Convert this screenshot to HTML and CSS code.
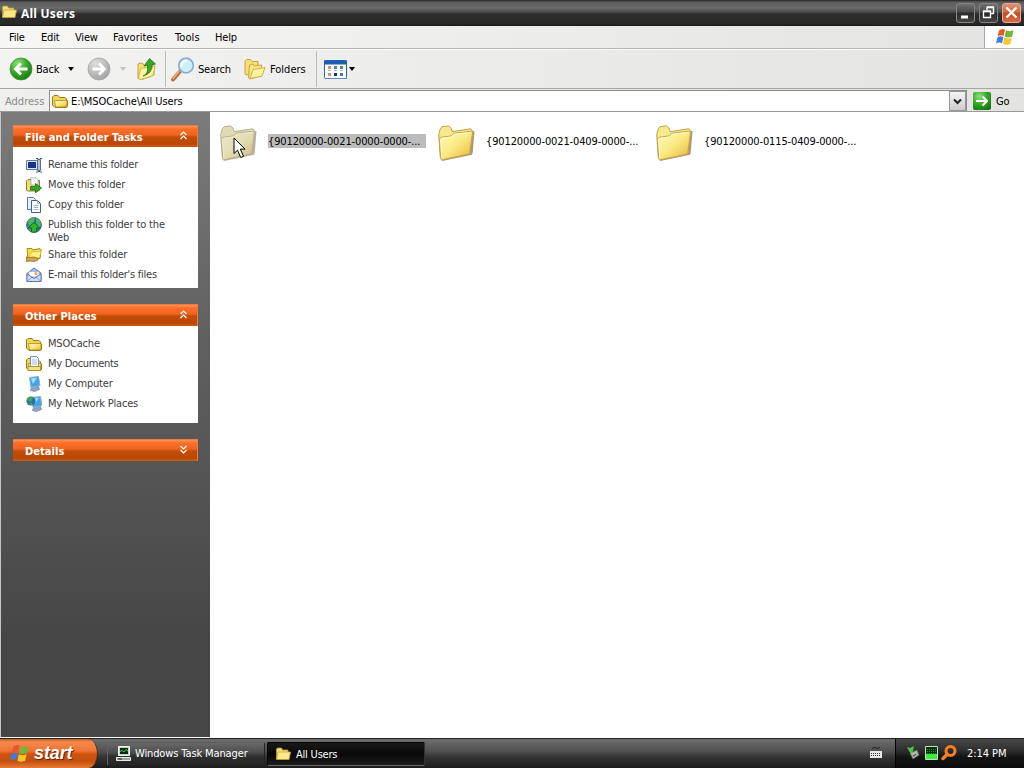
FILE: index.html
```html
<!DOCTYPE html>
<html lang="en">
<head>
  <meta charset="UTF-8" />
  <title>All Users</title>
  <link rel="stylesheet" href="styles.css">
</head>
<body>

  <!-- Shared icons -->
  <svg class="defs" width="0" height="0">
    <defs>
      <linearGradient id="gFolder" x1="0" y1="0" x2="1" y2="1">
        <stop offset="0" stop-color="#fffbb5"/><stop offset=".5" stop-color="#fbe983"/><stop offset="1" stop-color="#e3b32f"/>
      </linearGradient>
      <radialGradient id="gGreen" cx=".35" cy=".25" r=".8">
        <stop offset="0" stop-color="#8fe07a"/><stop offset=".5" stop-color="#3cab2c"/><stop offset="1" stop-color="#167a10"/>
      </radialGradient>
      <radialGradient id="gGray" cx=".35" cy=".25" r=".8">
        <stop offset="0" stop-color="#dedede"/><stop offset="1" stop-color="#a2a2a2"/>
      </radialGradient>
      <symbol id="folder" viewBox="0 0 16 16">
        <path d="M.5 12V4L2 2.500h4L7.500 4.500H13L14.500 6v1L15.500 8v5.500l-1 1H3z" fill="#f0d45c" stroke="#9c7a14"/>
        <path d="M3.500 14L2.500 7.500H15V13.500l-1 .5z" fill="url(#gFolder)" stroke="#b08a1c" stroke-width=".8"/>
      </symbol>
      <symbol id="folderOpen" viewBox="0 0 16 16">
        <path d="M1.500 13V3l1-1h4l1 2H13v3" fill="#f3df7c" stroke="#b5962c" stroke-width=".8"/>
        <path d="M1.500 13.500L3 6h12.500l-1.500 7.500z" fill="#fbe88a" stroke="#c8a52c" stroke-width=".8"/>
      </symbol>
      <symbol id="bigFolder" viewBox="0 0 40 42">
        <path d="M5 38.500L36 32 38.500 8 36.500 31.500" fill="none" stroke="#6f5420" stroke-width="2" opacity=".6"/>
        <path d="M3.500 36L1.800 11.500L3.500 5.500 5.500 3.300 12 2.500 14.500 4.500 16 8.500 35.500 5.500 37 7 35 31z" fill="#f8e98c" stroke="#b79b48"/>
        <path d="M4 37.500L2.700 16.500Q3 14.500 5 14.300L15 13 18 10.200 36 8Q37.500 8 37.300 10L34.500 30.500Q34.300 32 33 32.300L6 38Q4.200 38.500 4 37.500z" fill="url(#gFolder)" stroke="#c2a145"/>
        <path d="M5 36L3.800 16.500 5.500 15.500 15.500 14 18.500 11.300 35.500 9.300" fill="none" stroke="#fffde0" stroke-width=".9"/>
      </symbol>
      <symbol id="flag" viewBox="0 0 20 18">
        <path d="M4 2.500Q7-.2 10 1.700L8.600 8Q5.500 6.300 2.600 8.400z" fill="#e8562a"/>
        <path d="M11 2.200Q14.500 4 18.500 2.300L17 8.800Q13 10.300 9.600 8.500z" fill="#6fb63a"/>
        <path d="M2.400 9.400Q5.400 7.300 8.400 9L7 15.300Q4 13.500 1 15.600z" fill="#3f7ddd"/>
        <path d="M9.400 9.600Q12.700 11.300 16.800 9.900L15.300 16Q11.500 17.600 8 15.800z" fill="#f6c62b"/>
      </symbol>
      <symbol id="up" viewBox="0 0 9 9">
        <path d="M1.500 4L4.500 1l3 3M1.500 8l3-3 3 3" fill="none" stroke="#fff" stroke-width="1.200"/>
      </symbol>
      <symbol id="monitor" viewBox="0 0 16 16">
        <path d="M3.500 1.500l9-1L14 9.500 5 11.500z" fill="#3fa5e6" stroke="#8ab1d4"/>
        <path d="M5 2.500l6-.8-4 6z" fill="#a5dfff"/>
        <path d="M5 12.500l7.500-2 1 3-5 2-4-1z" fill="#8fa5c9" stroke="#71839f" stroke-width=".7"/>
      </symbol>
    </defs>
  </svg>

  <!-- Title bar -->
  <div class="titlebar">
    <svg class="title-icon" width="16" height="16"><use href="#folderOpen"/></svg>
    <h1>All Users</h1>
    <div class="window-buttons">
      <div class="win-btn"><svg width="19" height="19"><path d="M5 14h7" stroke="#fff" stroke-width="3"/></svg></div>
      <div class="win-btn"><svg width="19" height="19"><path d="M4.500 8.500h7v6h-7zM4 8h8M8 7V4.500h6.500v6H12M8 4h7" fill="none" stroke="#fff" stroke-width="1.400"/></svg></div>
      <div class="win-btn close"><svg width="19" height="19"><path d="M4.500 4.500l10 10M14.500 4.500l-10 10" stroke="#fff" stroke-width="2.200"/></svg></div>
    </div>
  </div>

  <!-- Menu bar -->
  <div class="menubar">
    <span class="m-file">File</span>
    <span class="m-edit">Edit</span>
    <span class="m-view">View</span>
    <span class="m-fav">Favorites</span>
    <span class="m-tools">Tools</span>
    <span class="m-help">Help</span>
    <div class="brand"><svg width="20" height="18"><use href="#flag"/></svg></div>
  </div>

  <!-- Toolbar -->
  <div class="toolbar">
    <div class="tool back">
      <svg width="24" height="24"><circle cx="12" cy="12" r="11" fill="url(#gGreen)" stroke="#3f8f34" stroke-width=".8"/><path d="M18.500 12H7M12 6.500L6.500 12l5.500 5.500" fill="none" stroke="#fff" stroke-width="2.800"/></svg>
      <span>Back</span>
      <i class="arrow"></i>
    </div>
    <div class="tool forward">
      <svg width="24" height="24"><circle cx="12" cy="12" r="11" fill="url(#gGray)" stroke="#a5a5a5" stroke-width=".8"/><path d="M5.500 12H17M12 6.500l5.500 5.500-5.500 5.500" fill="none" stroke="#fff" stroke-width="2.800"/></svg>
      <i class="arrow off"></i>
    </div>
    <svg class="tool-up" width="22" height="24" viewBox="0 0 22 24">
      <path d="M2 21.500V7l2-1 3 .5 1 2 10-1V18L6 22.500z" fill="#f4de78" stroke="#c5a238"/>
      <path d="M2.500 21.500l2-10L19 9l-2 9.500L5 22.500z" fill="#fff2a1" stroke="#cbab3e" stroke-width=".8"/>
      <path d="M7 19Q13 17 11.500 8L8 9l5.500-7.500L19.500 7l-3.500.5Q17 16 7 19z" fill="#36a52c" stroke="#1d7a18" stroke-width=".8"/>
    </svg>
    <div class="tool search">
      <svg width="26" height="26" viewBox="0 0 26 26">
        <path d="M3 23.500L9.500 16" stroke="#b8703c" stroke-width="4" stroke-linecap="round"/>
        <path d="M3 22.500L9 15.500" stroke="#f1b27c" stroke-width="1.500" stroke-linecap="round"/>
        <circle cx="16" cy="9.500" r="7.300" fill="#cdeefb" stroke="#8eaccb" stroke-width="1.700"/>
        <path d="M11.500 10.500Q12 5 17 4.500" fill="none" stroke="#fff" stroke-width="2.200"/>
      </svg>
      <span>Search</span>
    </div>
    <div class="tool folders">
      <svg width="22" height="22" viewBox="0 0 22 22">
        <path d="M1 15.500V3l1.500-1.500h4L8 3.500h6V14L2 17z" fill="#f6df75" stroke="#c9a63a"/>
        <path d="M4.500 20l1-13 3.500-1 1.500 2 7-1v11L6 21z" fill="#f8e588" stroke="#c9a63a"/>
        <path d="M6 20.500L9 11.500l12-2-3 8.500z" fill="#fff3a2" stroke="#d2b14a"/>
      </svg>
      <span>Folders</span>
    </div>
    <div class="tool views">
      <svg width="24" height="20">
        <rect x=".5" y=".5" width="22" height="18" rx="1" fill="#fff" stroke="#2467b3"/>
        <path d="M0 2.500h23" stroke="#1a5cb0" stroke-width="4"/><path d="M1 18.500h22" stroke="#5a8cc5"/>
        <path d="M4 7.500h3M4 14.500h3" stroke="#d98d78" stroke-width="3"/><path d="M10 7.500h3" stroke="#4b82c4" stroke-width="3"/>
        <path d="M16 7.500h3" stroke="#4d944c" stroke-width="3"/><path d="M10 14.500h3" stroke="#12386e" stroke-width="3"/><path d="M16 14.500h3" stroke="#4178bd" stroke-width="3"/>
        <path d="M4 10.500h3M10 10.500h3M16 10.500h3" stroke="#b5b5b5"/>
      </svg>
      <i class="arrow"></i>
    </div>
  </div>

  <!-- Address bar -->
  <div class="addressbar">
    <span class="address-label">Address</span>
    <div class="address-field">
      <svg width="16" height="16"><use href="#folder"/></svg>
      <span>E:\MSOCache\All Users</span>
      <div class="drop"><svg width="9" height="7"><path d="M1 1.500l3.500 3.500L8 1.500" fill="none" stroke="#222" stroke-width="2"/></svg></div>
    </div>
    <svg class="go-icon" width="18" height="18"><rect width="18" height="18" rx="2" fill="url(#gGreen)"/><path d="M3 9h11M9.500 4.500L14 9l-4.500 4.500" fill="none" stroke="#fff" stroke-width="2"/></svg>
    <span class="go">Go</span>
  </div>

  <div class="main">
    <!-- Task pane -->
    <div class="sidebar">
      <div class="panel">
        <div class="panel-head"><h2 class="h-tasks">File and Folder Tasks</h2><svg width="9" height="9"><use href="#up"/></svg></div>
        <ul class="panel-body tasks">
          <li>
            <svg width="16" height="16"><path d="M.5 3.500h11v9H.5z" fill="#dfe6f5" stroke="#6676a6"/><path d="M2 5h8v6H2z" fill="#14358f"/><path d="M10 1.500h2l1 1 1-1h2M10 15h2l1-1 1 1h2" fill="none" stroke="#47577e"/><path d="M11.500 2.500h3v11h-3z" fill="#b4bfd8" stroke="#5d6c91"/></svg>
            <span class="t1">Rename this folder</span>
          </li>
          <li>
            <svg width="16" height="16"><path d="M.5 13V4L2 2.500h3l1 1h7.500V13l-1 1H2z" fill="#f3dd6c" stroke="#94802c"/><path d="M5 .8h5l2 2V8H5z" fill="#fff" stroke="#8c9ab8" stroke-width=".7"/><path d="M4.500 9.500h5V6.500L15.500 11 9.500 15.800V13h-5z" fill="#36aa28" stroke="#176e12" stroke-width=".8"/></svg>
            <span class="t2">Move this folder</span>
          </li>
          <li>
            <svg width="16" height="16"><path d="M1.500.5h6l2 2v10h-8z" fill="#eaf2ff" stroke="#5277a8"/><path d="M5.500 3.500h6l3 3v9h-9z" fill="#fff" stroke="#3e628f"/><path d="M11.500 3.500v3h3M7.500 8.500h5M7.500 10.500h5M7.500 12.500h5" fill="none" stroke="#7fa3d2" stroke-width=".8"/></svg>
            <span class="t3">Copy this folder</span>
          </li>
          <li class="two-lines">
            <svg width="16" height="16"><circle cx="8" cy="8" r="7.500" fill="#2c6aa8" stroke="#245785" stroke-width=".7"/><path d="M1.500 5Q4 0 9 .8L8 5 3 9zM10 1q4 1 5 6l-1 4-4-5zM1 9q3 0 4 5-3-1-4-5z" fill="#4cb65a"/><path d="M8 5.500l6 5.500h-3.500v4h-5v-4H2z" fill="#2fb629" stroke="#126713" stroke-width=".8"/></svg>
            <span class="t4">Publish this folder to the<br>Web</span>
          </li>
          <li>
            <svg width="16" height="16"><path d="M1 1.500h5l1 1.500 7-1.500 1 1-1 9L2 12z" fill="#f5df3e" stroke="#a88820"/><path d="M3 11l2.500-6 9.500-1-1.500 7z" fill="#fff27d" stroke="#c9a63a" stroke-width=".6"/><path d="M0 10l4 .5 4-.5 4 1.500v1.500L8 14.500 4 14l-4 .5z" fill="#d0a54e" stroke="#80601f" stroke-width=".7"/></svg>
            <span class="t5">Share this folder</span>
          </li>
          <li>
            <svg width="16" height="16"><path d="M1 6.500L8 1l7 5v8.500H1z" fill="#a9bee8" stroke="#5870ad"/><path d="M3 4.500h10V10H3z" fill="#fff" stroke="#93a5cc" stroke-width=".7"/><circle cx="10" cy="6.500" r="1.500" fill="#f0a04b"/><path d="M1 7l7 4.500L15 7v7.500H1z" fill="#cfdefa" stroke="#5870ad" stroke-width=".9"/><path d="M1 14.500l5-4.500M15 14.500L10 10" stroke="#6f87bf" stroke-width=".8"/></svg>
            <span class="t6">E-mail this folder's files</span>
          </li>
        </ul>
      </div>

      <div class="panel">
        <div class="panel-head"><h2 class="h-places">Other Places</h2><svg width="9" height="9"><use href="#up"/></svg></div>
        <ul class="panel-body places">
          <li><svg width="16" height="16"><use href="#folder"/></svg><span class="p1">MSOCache</span></li>
          <li>
            <svg width="16" height="16"><use href="#folder"/><path d="M4.500.5h6l2 2v8h-8z" fill="#fff" stroke="#597fb0" stroke-width=".8"/><path d="M6 4h5M6 6h5M6 8h5" stroke="#86a7d4" stroke-width=".8"/><path d="M2 10.500h12.500v4H2z" fill="#f6e27b" stroke="#a8851d" stroke-width=".8"/></svg>
            <span class="p2">My Documents</span>
          </li>
          <li><svg width="16" height="16"><use href="#monitor"/></svg><span class="p3">My Computer</span></li>
          <li>
            <svg width="16" height="16"><use href="#monitor" x="2"/><circle cx="5" cy="5" r="4.600" fill="#2d6fa8"/><path d="M1 4q2-4 6-2.500L5 6zM3 8l2-2 2 3z" fill="#43a94a"/></svg>
            <span class="p4">My Network Places</span>
          </li>
        </ul>
      </div>

      <div class="panel">
        <div class="panel-head"><h2 class="h-details">Details</h2><svg class="flip" width="9" height="9"><use href="#up"/></svg></div>
      </div>
    </div>

    <!-- Folder contents -->
    <div class="files">
      <div class="file selected">
        <svg width="38" height="41" viewBox="0 0 40 42"><use href="#bigFolder" width="40" height="42"/></svg>
        <span>{90120000-0021-0000-0000-...</span>
        <svg class="cursor" width="14" height="22"><path d="M1 1v15.500l3.500-3.300 3.200 7.300 2.800-1.200-3.200-7.200H12z" fill="#fff" stroke="#000"/></svg>
      </div>
      <div class="file">
        <svg width="38" height="41" viewBox="0 0 40 42"><use href="#bigFolder" width="40" height="42"/></svg>
        <span>{90120000-0021-0409-0000-...</span>
      </div>
      <div class="file">
        <svg width="38" height="41" viewBox="0 0 40 42"><use href="#bigFolder" width="40" height="42"/></svg>
        <span>{90120000-0115-0409-0000-...</span>
      </div>
    </div>
  </div>

  <!-- Taskbar -->
  <div class="taskbar">
    <div class="start">
      <svg width="21" height="19" viewBox="0 0 20 18"><use href="#flag" width="20" height="18"/></svg>
      <span>start</span>
    </div>
    <div class="task">
      <svg width="16" height="16"><path d="M2.500.5h11v9h-11z" fill="#c9d4c9" stroke="#eef3ee"/><path d="M4 2h8v6H4z" fill="#052b0b"/><path d="M4 5.500l2-1 2 1.500 2-2.500 2 1.500" fill="none" stroke="#54c95b"/><path d="M.5 11.500h14v3H.5z" fill="#9aa59a" stroke="#e6ece6"/><path d="M2 13h4" stroke="#1a1a1a"/></svg>
      <span class="k1">Windows Task Manager</span>
    </div>
    <div class="task active">
      <svg width="16" height="16"><use href="#folderOpen"/></svg>
      <span class="k2">All Users</span>
    </div>
    <svg class="keyboard" width="14" height="13"><path d="M3 3q2-3 4-1t4-1" fill="none" stroke="#222"/><path d="M1 5h12v7H1z" fill="#e9e9e9"/><path d="M2 7.500h10M2 9.500h10" stroke="#333" stroke-dasharray="1 1"/></svg>
    <div class="tray">
      <svg width="14" height="16"><path d="M4 8l7-3 2 5-6 4z" fill="#aeb5ae" stroke="#5c645c" stroke-width=".8"/><path d="M7 11l3-1.500" stroke="#333"/><path d="M1 2l3 1 4-2-1 5-2 3-2-3z" fill="#4bc548"/></svg>
      <svg width="13" height="14"><path d="M.5.5h12v13H.5z" fill="#0b2f0b" stroke="#b8e8b8"/><path d="M2 3.500h9M2 5.500h9M2 7.500h9" stroke="#23822b" stroke-dasharray="1 1"/><path d="M1 8h11v5H1z" fill="#37ec3b"/></svg>
      <svg width="16" height="16"><circle cx="9.500" cy="6" r="4.500" fill="none" stroke="#f58220" stroke-width="3"/><path d="M6.300 9.200L2 13.500" stroke="#f58220" stroke-width="3.400" stroke-linecap="round"/></svg>
      <span class="clock">2:14 PM</span>
    </div>
  </div>

</body>
</html>
```

FILE: styles.css
```css
* {
  margin: 0;
  padding: 0;
  box-sizing: border-box;
}

body {
  width: 1024px;
  height: 768px;
  overflow: hidden;
  display: flex;
  flex-direction: column;
  font-family: "DejaVu Sans Condensed", "DejaVu Sans", sans-serif;
  font-stretch: condensed;
  font-size: 11px;
  line-height: 13px;
  letter-spacing: -0.2px;
  color: #000;
  background: #fff;
  white-space: nowrap;
}

svg {
  display: block;
  flex: none;
}

.defs {
  position: absolute;
}

/* Title bar */
.titlebar {
  height: 26px;
  flex: none;
  display: flex;
  align-items: center;
  padding: 0 3px 0 1px;
  background: linear-gradient(#222 0, #5c5c5c 2px, #6a6a6a 8px, #4b4b4b 12px, #2e2e2e 14px, #292929 24px, #161616 26px);
}

.title-icon {
  margin-top: -3px;
}

.titlebar h1 {
  margin-left: 4px;
  font-family: "Open Sans", sans-serif;
  font-stretch: normal;
  font-size: 12px;
  font-weight: bold;
  letter-spacing: 0.2px;
  color: #fff;
}

.window-buttons {
  display: flex;
  gap: 4px;
  margin-left: auto;
}

.win-btn {
  width: 19px;
  height: 20px;
  border: 1px solid #858585;
  border-radius: 3px;
  background: linear-gradient(#707070, #4a4a4a 45%, #292929 50%, #454545);
}

.win-btn svg {
  margin: -1px;
}

.win-btn.close {
  border-color: #e5ab98;
  background: linear-gradient(#df8f73, #d46b47 45%, #c34c20 50%, #d86c45);
}

/* Menu bar */
.menubar {
  height: 23px;
  flex: none;
  display: flex;
  align-items: center;
  padding-left: 9px;
  border-bottom: 1px solid #b5b5b5;
  background: linear-gradient(90deg, #f6f6f5, #e3e3e2);
}

.m-file { width: 32px; }
.m-edit { width: 34px; }
.m-view { width: 38px; }
.m-fav { width: 62px; letter-spacing: 0; }
.m-tools { width: 40px; letter-spacing: 0.1px; }

.brand {
  width: 40px;
  height: 22px;
  margin-left: auto;
  padding: 2px 0 0 10px;
  border-left: 1px solid #aaa;
  background: #fff;
}

/* Toolbar */
.toolbar {
  height: 40px;
  flex: none;
  display: flex;
  align-items: center;
  padding-left: 9px;
  border-top: 1px solid #fafafa;
  border-bottom: 1px solid #a5a5a5;
  background: linear-gradient(90deg, #f3f3f1, #e3e3e2);
}

.tool {
  display: flex;
  align-items: center;
}

.arrow {
  border: 3px solid transparent;
  border-top: 4px solid #000;
  border-bottom: 0;
}

.arrow.off {
  border-top-color: #c2c2c2;
}

.back { width: 78px; }
.back span { width: 32px; margin-left: 3px; }
.forward { width: 49px; }
.forward .arrow { margin-left: 9px; }

.search {
  width: 79px;
  height: 36px;
  margin-left: 7px;
  padding-left: 4px;
  border-left: 1px solid #bbb;
}

.search span { margin-left: 2px; }

.folders { width: 63px; }
.folders span { margin-left: 4px; letter-spacing: 0; }

.views {
  height: 36px;
  margin-left: 9px;
  padding-left: 7px;
  border-left: 1px solid #bbb;
}

.views svg { margin-top: 2px; }
.views .arrow { margin-left: 1px; }

/* Address bar */
.addressbar {
  height: 23px;
  flex: none;
  display: flex;
  align-items: center;
  padding-left: 5px;
  border-bottom: 1px solid #999;
  background: linear-gradient(90deg, #efefee, #e3e3e2);
}

.address-label {
  width: 44px;
  padding-top: 2px;
  color: #8a8a8a;
  letter-spacing: 0;
}

.address-field {
  width: 918px;
  height: 21px;
  display: flex;
  align-items: center;
  padding-left: 2px;
  border: 1px solid #8c8c8c;
  border-bottom: 0;
  background: #fff;
}

.address-field span {
  margin-left: 3px;
  padding-top: 1px;
  letter-spacing: -0.05px;
}

.drop {
  width: 17px;
  height: 20px;
  margin-left: auto;
  padding: 6px 0 0 3px;
  border: 1px solid #999;
  background: linear-gradient(#f5f5f5, #ccc);
}

.go-icon {
  margin: 1px 5px 0 6px;
}

.go {
  padding-top: 2px;
}

/* Main */
.main {
  height: 626px;
  flex: none;
  display: flex;
}

.sidebar {
  width: 210px;
  height: 625px;
  padding: 13px 12px 0;
  border-left: 1px solid #c5c5c5;
  background: linear-gradient(#7b7b7b, #616161 35%, #464646 85%);
}

.panel {
  width: 185px;
  margin-bottom: 16px;
}

.panel-head {
  height: 22px;
  display: flex;
  align-items: center;
  justify-content: space-between;
  padding: 1px 9px 0 12px;
  border: 1px solid #ef7a3b;
  border-width: 1px 1px 0 0;
  background: linear-gradient(#ff9455 0, #fa6f2b 3px, #f1641f 9px, #c24d08 11px, #b94804 18px, #d8601c 22px);
}

.panel-head h2 {
  font-size: 11px;
  color: #fff;
}

.panel-head svg {
  margin-top: -3px;
}

.panel-head .flip {
  transform: scaleY(-1);
}

.h-tasks { letter-spacing: 0.03px; }
.h-places { letter-spacing: 0.05px; }
.h-details { letter-spacing: 0.05px; }

.panel-body {
  list-style: none;
  background: #fff;
  color: #3c3c3c;
}

.tasks { padding: 7px 13px 4px; }
.places { padding: 7px 13px 10px; }

.panel-body li {
  height: 20px;
  display: flex;
  padding-top: 3px;
}

.panel-body li.two-lines {
  height: 30px;
}

.panel-body span {
  margin-left: 6px;
  padding-top: 1px;
}

.t2, .t3, .t4, .t5 { letter-spacing: -0.15px; }
.t6 { letter-spacing: -0.25px; }
.p2 { letter-spacing: -0.3px; }

/* Files */
.files {
  flex: 1;
  display: flex;
  align-items: flex-start;
  padding: 11px 0 0 9px;
  background: #fff;
}

.file {
  position: relative;
  width: 218px;
  display: flex;
  align-items: center;
}

.file span {
  width: 158px;
  height: 14px;
  margin: -5px 0 0 11px;
  padding-top: 1px;
  letter-spacing: -0.13px;
}

.file.selected span {
  background: #bcbcbc;
}

.file.selected svg:first-child {
  opacity: .75;
  filter: saturate(.6) brightness(.9);
}

.file .cursor {
  position: absolute;
  left: 14px;
  top: 14px;
}

/* Taskbar */
.taskbar {
  height: 30px;
  flex: none;
  display: flex;
  align-items: center;
  border-top: 1px solid #222;
  color: #fff;
  background: linear-gradient(#6e6e6e, #515151 12px, #343434 18px, #1c1c1c);
}

.start {
  width: 98px;
  height: 29px;
  display: flex;
  align-items: center;
  padding-left: 9px;
  border-right: 1px solid #5b2a0e;
  border-radius: 0 10px 10px 0 / 0 15px 15px 0;
  background: linear-gradient(#c75a20, #f58a4c 3px, #ee7434 12px, #d2530f 15px, #c4500f 22px, #e67a35);
}

.start span {
  margin-left: 4px;
  font-family: "Liberation Sans", sans-serif;
  font-stretch: normal;
  font-size: 18px;
  font-weight: bold;
  font-style: italic;
  letter-spacing: -0.1px;
  text-shadow: 1px 1px 1px #5a2206;
}

.task {
  width: 158px;
  height: 24px;
  display: flex;
  align-items: center;
  margin-left: 9px;
  padding-left: 8px;
  border: 1px solid #606060;
  border-color: #606060 #222 #222 #606060;
  border-radius: 2px;
  background: linear-gradient(#686868, #4c4c4c 45%, #303030 60%, #252525);
}

.task span {
  margin-left: 3px;
}

.k1 { letter-spacing: -0.12px; }

.task.active {
  margin-left: 2px;
  border-color: #050505 #333 #6a6a6a #050505;
  background: linear-gradient(#191919, #080808 50%, #1c1c1c);
}

.task.active svg {
  margin-left: -1px;
}

.task.active span {
  margin-left: 5px;
  padding-top: 1px;
}

.keyboard {
  margin: 0 12px 2px auto;
}

.tray {
  width: 129px;
  height: 29px;
  display: flex;
  align-items: center;
  gap: 5px;
  padding-left: 10px;
  border-left: 1px solid #000;
  background: linear-gradient(#4a4a4a, #2c2c2c 12px, #141414 18px, #0d0d0d);
}

.tray svg {
  margin-top: -2px;
}

.tray svg + svg + svg {
  margin-left: -2px;
}

.clock {
  margin-left: 5px;
  letter-spacing: -0.05px;
}
```
